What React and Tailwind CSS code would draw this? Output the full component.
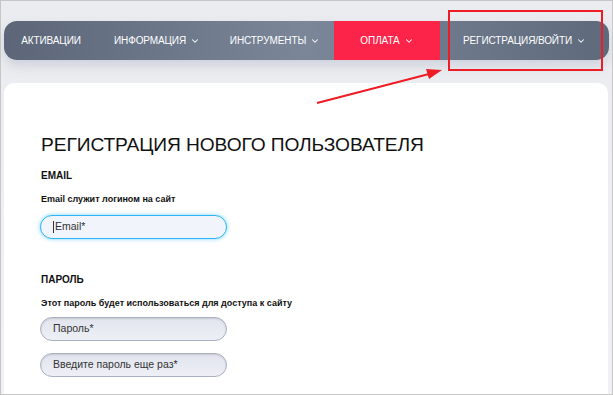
import { ChevronDown } from 'lucide-react';

const navItems = [
  { label: 'АКТИВАЦИИ', w: 'w-[94px]', caret: false },
  { label: 'ИНФОРМАЦИЯ', w: 'w-[118px]', caret: true },
  { label: 'ИНСТРУМЕНТЫ', w: 'w-[118px]', caret: true },
  { label: 'ОПЛАТА', w: 'w-[106px]', caret: true, active: true },
  { label: 'РЕГИСТРАЦИЯ/ВОЙТИ', w: 'flex-1', caret: true },
];

function NavBar() {
  return (
    <nav className="mx-[3px] mt-[20px] h-[39px] rounded-[13px] flex overflow-hidden bg-gradient-to-r from-[#5c6678] via-[#7b8699] to-[#5e6a7b] shadow-[0_6px_12px_rgba(120,130,160,0.25)]">
      {navItems.map((item) => (
        <div
          key={item.label}
          className={`${item.w} h-full flex items-center justify-center gap-[4px] text-[10px] tracking-[-0.1px] text-white ${
            item.active ? 'bg-[#fd2449]' : ''
          }`}
        >
          <span>{item.label}</span>
          {item.caret && <ChevronDown size={10} strokeWidth={2.5} />}
        </div>
      ))}
    </nav>
  );
}

function Field({ placeholder, focused }) {
  return (
    <div
      className={`w-[187px] h-[24px] rounded-full flex items-center pl-[12px] text-[10.5px] text-[#333] ${
        focused
          ? 'border-[1.5px] border-[#2cb6f6] bg-[#f1f4fb] shadow-[0_0_4px_rgba(44,182,246,0.6)]'
          : 'border border-[#aab0c3] bg-gradient-to-b from-[#e2e4ee] to-[#eef0f6] shadow-[inset_0_1px_2px_rgba(0,0,0,0.12)]'
      }`}
    >
      {focused && <span className="w-px h-[12px] bg-[#333] mr-px" />}
      {placeholder}
    </div>
  );
}

export default function App() {
  return (
    <div className="relative w-[613px] h-[395px] overflow-hidden border border-[#c6c6c6] bg-gradient-to-b from-[#ebecf0] to-[#f0f1f4] font-['Liberation_Sans',Arial,sans-serif]">
      <NavBar />

      <div className="mt-[23px] ml-[3px] mr-[4px] h-[320px] bg-white rounded-t-[10px] pl-[37px] pt-[52px] text-[#111]">
        <h1 className="text-[19.2px] leading-none tracking-[-0.1px]">РЕГИСТРАЦИЯ НОВОГО ПОЛЬЗОВАТЕЛЯ</h1>

        <div className="mt-[17px] text-[10px] font-bold leading-none">EMAIL</div>
        <div className="mt-[14px] text-[9px] font-bold leading-none">Email служит логином на сайт</div>
        <div className="mt-[11px] -ml-[1px]">
          <Field placeholder="Email*" focused />
        </div>

        <div className="mt-[36px] text-[10px] font-bold leading-none">ПАРОЛЬ</div>
        <div className="mt-[14px] text-[9px] font-bold leading-none">Этот пароль будет использоваться для доступа к сайту</div>
        <div className="mt-[9px] -ml-[1px] flex flex-col gap-[12px]">
          <Field placeholder="Пароль*" />
          <Field placeholder="Введите пароль еще раз*" />
        </div>
      </div>

      {/* annotation overlay */}
      <div className="absolute left-[447px] top-[9px] w-[155px] h-[61px] border-2 border-[#ee1c25]" />
      <svg className="absolute left-0 top-0" width="613" height="395" viewBox="0 0 613 395">
        <line x1="316" y1="102" x2="428" y2="73" stroke="#ee1c25" strokeWidth="2" />
        <polygon points="441,69 425,68 428,78" fill="#ee1c25" />
      </svg>
    </div>
  );
}
